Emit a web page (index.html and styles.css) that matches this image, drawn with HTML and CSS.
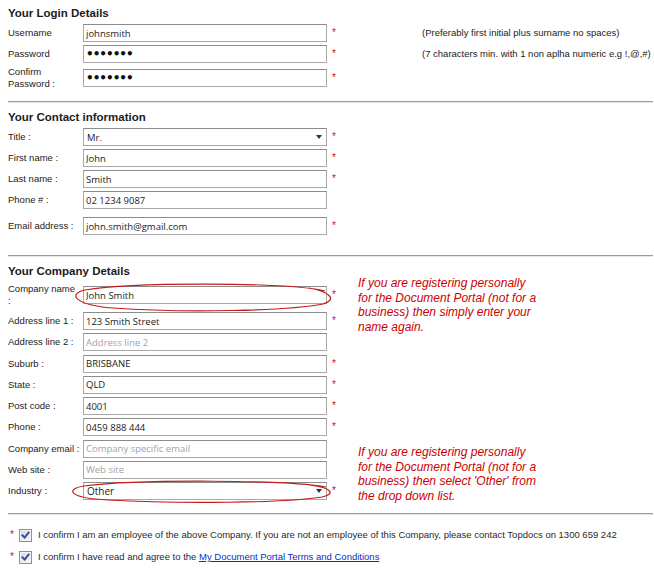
FILE: index.html
```html
<!DOCTYPE html>
<html lang="en">
<head>
  <meta charset="UTF-8" />
  <title>Document Portal Registration</title>
  <link rel="stylesheet" href="styles.css">
</head>
<body>
  <form class="reg">

    <!-- Login details -->
    <h2>Your Login Details</h2>
    <div class="row">
      <label for="username">Username</label>
      <input class="field" type="text" id="username" value="johnsmith" />
      <span class="req">*</span>
      <span class="note">(Preferably first initial plus surname no spaces)</span>
    </div>
    <div class="row">
      <label for="password">Password</label>
      <input class="field pw" type="password" id="password" value="abcdefg" />
      <span class="req">*</span>
      <span class="note">(7 characters min. with 1 non aplha numeric e.g !,@,#)</span>
    </div>
    <div class="row tall">
      <label for="confirm">Confirm<br>Password :</label>
      <input class="field pw" type="password" id="confirm" value="abcdefg" />
      <span class="req">*</span>
    </div>

    <hr>

    <!-- Contact information -->
    <h2>Your Contact information</h2>
    <div class="row">
      <label for="title">Title :</label>
      <div class="select">
        <select class="field" id="title">
          <option>Mr.</option>
          <option>Mrs.</option>
          <option>Ms.</option>
        </select>
      </div>
      <span class="req">*</span>
    </div>
    <div class="row">
      <label for="first">First name :</label>
      <input class="field" type="text" id="first" value="John" />
      <span class="req">*</span>
    </div>
    <div class="row">
      <label for="last">Last name :</label>
      <input class="field" type="text" id="last" value="Smith" />
      <span class="req">*</span>
    </div>
    <div class="row">
      <label for="phone">Phone # :</label>
      <input class="field" type="text" id="phone" value="02 1234 9087" />
    </div>
    <div class="row spaced">
      <label for="email">Email address :</label>
      <input class="field" type="text" id="email" value="john.smith@gmail.com" />
      <span class="req">*</span>
    </div>

    <hr class="wide">

    <!-- Company details -->
    <div class="split">
      <div class="fields">
        <h2>Your Company Details</h2>
        <div class="row first">
          <label for="company">Company name<br>:</label>
          <input class="field" type="text" id="company" value="John Smith" />
          <span class="req">*</span>
          <svg class="ring ring-company" viewBox="0 0 260 28" width="260" height="28">
            <path d="M252 8 C215 -1 60 -1 12 7 C-6 11 2 22 40 25 C110 30 215 28 250 21 C264 17 258 9 236 5" />
          </svg>
        </div>
        <div class="row">
          <label for="addr1">Address line 1 :</label>
          <input class="field" type="text" id="addr1" value="123 Smith Street" />
          <span class="req">*</span>
        </div>
        <div class="row">
          <label for="addr2">Address line 2 :</label>
          <input class="field" type="text" id="addr2" placeholder="Address line 2" />
        </div>
        <div class="row">
          <label for="suburb">Suburb :</label>
          <input class="field" type="text" id="suburb" value="BRISBANE" />
          <span class="req">*</span>
        </div>
        <div class="row">
          <label for="state">State :</label>
          <input class="field" type="text" id="state" value="QLD" />
          <span class="req">*</span>
        </div>
        <div class="row">
          <label for="postcode">Post code :</label>
          <input class="field" type="text" id="postcode" value="4001" />
          <span class="req">*</span>
        </div>
        <div class="row">
          <label for="cphone">Phone :</label>
          <input class="field" type="text" id="cphone" value="0459 888 444" />
          <span class="req">*</span>
        </div>
        <div class="row">
          <label for="cemail">Company email :</label>
          <input class="field" type="text" id="cemail" placeholder="Company specific email" />
        </div>
        <div class="row">
          <label for="web">Web site :</label>
          <input class="field" type="text" id="web" placeholder="Web site" />
        </div>
        <div class="row">
          <label for="industry">Industry :</label>
          <div class="select">
            <select class="field big" id="industry">
              <option>Other</option>
              <option>Accounting</option>
              <option>Legal</option>
            </select>
          </div>
          <span class="req">*</span>
          <svg class="ring ring-industry" viewBox="0 0 263 23" width="263" height="23">
            <path d="M256 7 C220 0 70 -1 14 6 C-5 9 -2 18 38 20 C110 24 215 23 252 17 C266 14 262 8 240 5" />
          </svg>
        </div>
      </div>

      <div class="aside">
        <p class="hint">If you are registering personally<br>for the Document Portal (not for a<br>business) then simply enter your<br>name again.</p>
        <p class="hint second">If you are registering personally<br>for the Document Portal (not for a<br>business) then select 'Other' from<br>the drop down list.</p>
      </div>
    </div>

    <hr class="last">

    <!-- Confirmation -->
    <div class="confirm">
      <span class="req">*</span>
      <input type="checkbox" id="employee" checked />
      <label for="employee">I confirm I am an employee of the above Company. If you are not an employee of this Company, please contact Topdocs on 1300 659 242</label>
    </div>
    <div class="confirm">
      <span class="req">*</span>
      <input type="checkbox" id="terms" checked />
      <label for="terms">I confirm I have read and agree to the <a href="#">My Document Portal Terms and Conditions</a></label>
    </div>

  </form>
</body>
</html>
```

FILE: styles.css
```css
body {
  margin: 0;
  font-family: "Liberation Sans", Arial, sans-serif;
  font-size: 9.5px;
  color: #222;
  background: #fff;
}

.reg {
  padding: 5px 1px 0 8px;
}

h2 {
  margin: 0;
  font-size: 11.5px;
  line-height: 16px;
  font-weight: bold;
  color: #1c1c1c;
}

hr {
  margin: 11px 0 6px;
  border: 0;
  border-top: 1px solid #9b9b9b;
  border-bottom: 1px solid #e6e6e6;
}

hr.wide {
  margin-top: 20px;
}

hr.last {
  margin: 10px 0 6px;
}

/* one label + input line */
.row {
  display: grid;
  grid-template-columns: 75px 244px 95px auto;
  align-items: center;
  min-height: 18px;
  margin-top: 3px;
}

.row label,
.note {
  line-height: 12px;
}

.row.tall {
  min-height: 24px;
}

.row.spaced {
  margin-top: 8px;
}

.req {
  color: #c8102e;
  font-size: 10px;
  line-height: 12px;
  padding-left: 5px;
}

.field {
  display: block;
  width: 244px;
  height: 18px;
  box-sizing: border-box;
  margin: 0;
  padding: 0 2px;
  border: 1px solid #a9a9a9;
  border-top-color: #8c8c8c;
  background: #fff;
  font: 9.5px "Open Sans", sans-serif;
  color: #222;
  outline: none;
}

.field::placeholder {
  color: #a3a3a3;
}

.field.pw {
  font-family: "DejaVu Sans", sans-serif;
  font-size: 12px;
  font-weight: bold;
  letter-spacing: -1px;
  color: #111;
}

.select {
  position: relative;
  height: 18px;
}

.select select {
  -webkit-appearance: none;
  appearance: none;
  border-radius: 0;
  padding-left: 3px;
}

.select select.big {
  font-size: 10px;
}

.select::after {
  content: "";
  position: absolute;
  right: 5px;
  top: 7px;
  border-left: 3px solid transparent;
  border-right: 3px solid transparent;
  border-top: 4px solid #333;
}

/* company block: fields on the left, notes on the right */
.split {
  display: flex;
}

.fields {
  width: 350px;
}

.fields .row {
  grid-template-columns: 75px 244px 31px;
  margin-top: 3.25px;
  position: relative;
}

.fields .row.first {
  margin-top: 3px;
  min-height: 26px;
}

.fields .row.first + .row {
  margin-top: 4px;
}

.ring {
  position: absolute;
  pointer-events: none;
  overflow: visible;
}

.ring path {
  fill: none;
  stroke: #c41a1a;
  stroke-width: 1.2;
}

.ring-company {
  left: 65px;
  top: 1px;
}

.ring-industry {
  left: 62px;
  top: -2px;
}

.aside {
  padding-top: 13px;
}

.hint {
  margin: 0;
  color: #c00;
  font-style: italic;
  font-size: 12px;
  line-height: 14.5px;
}

.hint.second {
  margin-top: 111px;
}

/* confirmation checkboxes */
.confirm {
  display: flex;
  align-items: center;
  height: 16px;
  margin-top: 6px;
}

hr + .confirm {
  margin-top: 12px;
}

.confirm .req {
  padding-left: 2px;
}

.confirm input {
  -webkit-appearance: none;
  appearance: none;
  position: relative;
  width: 13px;
  height: 13px;
  margin: 0 6px 0 5px;
  border: 1px solid #8e8f8f;
  background: linear-gradient(135deg, #d4d9e4, #f7f8fa);
  box-shadow: inset 0 0 0 1px #f4f4f4;
}

.confirm input:checked::before {
  content: "";
  position: absolute;
  left: 3.5px;
  top: 0.5px;
  width: 3px;
  height: 6px;
  border-right: 2px solid #3a4f9f;
  border-bottom: 2px solid #3a4f9f;
  transform: rotate(40deg);
}

.confirm label {
  line-height: 12px;
  color: #2a2a2a;
}

.confirm a {
  color: #0a2fc4;
}
```
